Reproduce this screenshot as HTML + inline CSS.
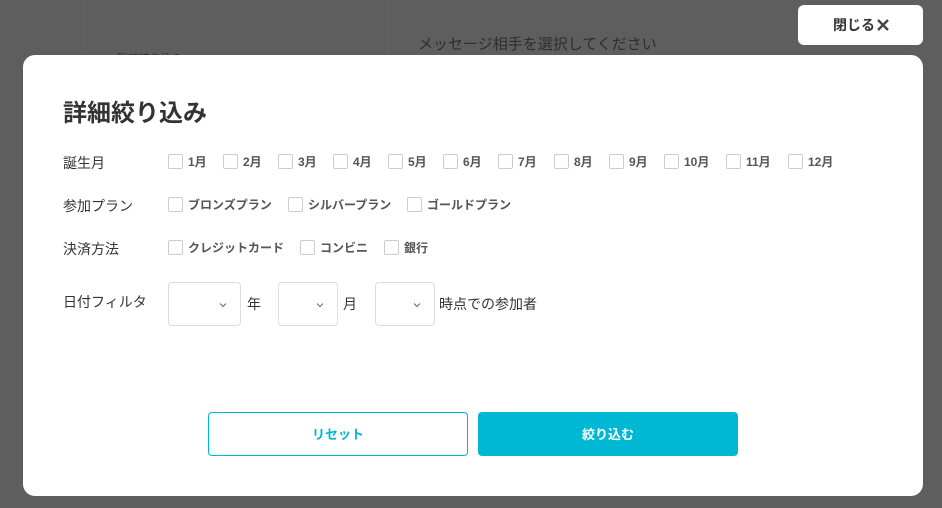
<!DOCTYPE html>
<html><head><meta charset="utf-8"><style>
*{margin:0;padding:0;box-sizing:border-box}
body{width:942px;height:508px;background:#5d5e5d;position:relative;overflow:hidden;font-family:"Liberation Sans","Noto Sans CJK JP",sans-serif;color:#333}
.a{position:absolute;white-space:nowrap}
.cb{position:absolute;width:15px;height:15px;border:1px solid #ccc;border-radius:2px;background:#fff}
.cl{position:absolute;font-size:12px;font-weight:bold;color:#555;white-space:nowrap}
.lab{position:absolute;left:63px;font-size:14px;color:#333}
.sel{position:absolute;top:282px;height:44px;border:1px solid #ddd;border-radius:4px;background:#fff}
.sel svg{position:absolute;top:19px}
</style></head><body>
<div class="a" style="left:85px;top:0;width:1px;height:55px;background:#626362"></div>
<div class="a" style="left:388px;top:0;width:1px;height:55px;background:#626362"></div>
<div class="a" style="left:418px;top:33px;font-size:15px;color:#2e2e2e">メッセージ相手を選択してください</div>
<div class="a" style="left:117px;top:50px;font-size:11px;color:#2e2e2e">詳細絞り込み</div>
<div class="a" style="left:798px;top:5px;width:125px;height:40px;background:#fff;border-radius:6px"></div>
<div class="a" style="left:833px;top:15px;font-size:14px;font-weight:bold;color:#333">閉じる</div>
<svg class="a" style="left:876px;top:18px" width="14" height="14" viewBox="0 0 14 14"><path d="M2 2L12 12M12 2L2 12" stroke="#444" stroke-width="2.4"/></svg>
<div class="a" style="left:23px;top:55px;width:900px;height:441px;background:#fff;border-radius:12px"></div>
<div class="a" style="left:63px;top:93px;font-size:24px;font-weight:bold;color:#333">詳細絞り込み</div>
<div class="lab" style="top:153px">誕生月</div>
<div class="lab" style="top:196px">参加プラン</div>
<div class="lab" style="top:239px">決済方法</div>
<div class="lab" style="top:292px">日付フィルタ</div>

<div class="cb" style="left:168px;top:154px"></div><div class="cl" style="left:188px;top:153px">1月</div>
<div class="cb" style="left:223px;top:154px"></div><div class="cl" style="left:243px;top:153px">2月</div>
<div class="cb" style="left:278px;top:154px"></div><div class="cl" style="left:298px;top:153px">3月</div>
<div class="cb" style="left:333px;top:154px"></div><div class="cl" style="left:353px;top:153px">4月</div>
<div class="cb" style="left:388px;top:154px"></div><div class="cl" style="left:408px;top:153px">5月</div>
<div class="cb" style="left:443px;top:154px"></div><div class="cl" style="left:463px;top:153px">6月</div>
<div class="cb" style="left:498px;top:154px"></div><div class="cl" style="left:518px;top:153px">7月</div>
<div class="cb" style="left:554px;top:154px"></div><div class="cl" style="left:574px;top:153px">8月</div>
<div class="cb" style="left:609px;top:154px"></div><div class="cl" style="left:629px;top:153px">9月</div>
<div class="cb" style="left:664px;top:154px"></div><div class="cl" style="left:684px;top:153px">10月</div>
<div class="cb" style="left:726px;top:154px"></div><div class="cl" style="left:746px;top:153px">11月</div>
<div class="cb" style="left:788px;top:154px"></div><div class="cl" style="left:808px;top:153px">12月</div>

<div class="cb" style="left:168px;top:197px"></div><div class="cl" style="left:188px;top:196px">ブロンズプラン</div>
<div class="cb" style="left:288px;top:197px"></div><div class="cl" style="left:308px;top:196px">シルバープラン</div>
<div class="cb" style="left:407px;top:197px"></div><div class="cl" style="left:427px;top:196px">ゴールドプラン</div>

<div class="cb" style="left:168px;top:240px"></div><div class="cl" style="left:188px;top:239px">クレジットカード</div>
<div class="cb" style="left:300px;top:240px"></div><div class="cl" style="left:320px;top:239px">コンビニ</div>
<div class="cb" style="left:384px;top:240px"></div><div class="cl" style="left:404px;top:239px">銀行</div>

<div class="sel" style="left:168px;width:73px"><svg style="left:50px" width="8" height="6" viewBox="0 0 8 6"><path d="M1 1.5L4 4.5L7 1.5" stroke="#777" fill="none" stroke-width="1.2"/></svg></div>
<div class="a" style="left:247px;top:294px;font-size:14px">年</div>
<div class="sel" style="left:278px;width:60px"><svg style="left:37px" width="8" height="6" viewBox="0 0 8 6"><path d="M1 1.5L4 4.5L7 1.5" stroke="#777" fill="none" stroke-width="1.2"/></svg></div>
<div class="a" style="left:343px;top:294px;font-size:14px">月</div>
<div class="sel" style="left:375px;width:60px"><svg style="left:37px" width="8" height="6" viewBox="0 0 8 6"><path d="M1 1.5L4 4.5L7 1.5" stroke="#777" fill="none" stroke-width="1.2"/></svg></div>
<div class="a" style="left:439px;top:294px;font-size:14px">時点での参加者</div>

<div class="a" style="left:208px;top:412px;width:260px;height:44px;border:1px solid #00b8d4;border-radius:4px;background:#fff;color:#00b8d4;font-size:13px;font-weight:bold;text-align:center;line-height:43px">リセット</div>
<div class="a" style="left:478px;top:412px;width:260px;height:44px;border-radius:4px;background:#00b8d4;color:#fff;font-size:13px;font-weight:bold;text-align:center;line-height:45px">絞り込む</div>
</body></html>
